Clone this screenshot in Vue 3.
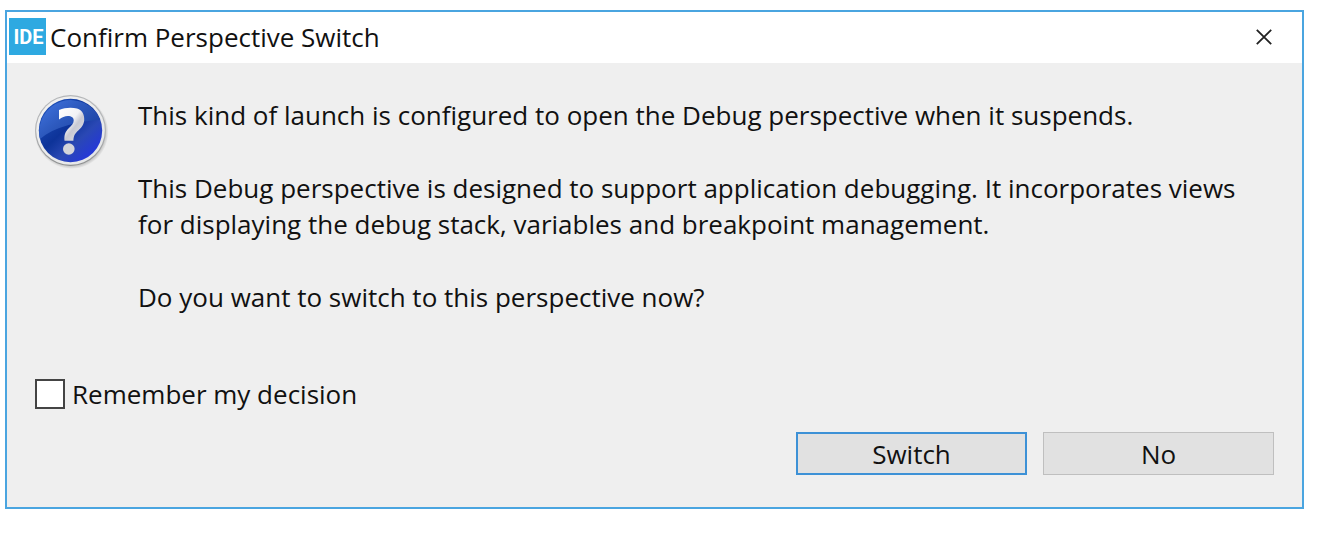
<script setup>
import { ref } from 'vue'

const remember = ref(false)
</script>

<template>
  <main class="desktop">
    <section class="dialog" role="dialog" aria-labelledby="dialog-title" aria-describedby="dialog-message">
      <header class="titlebar">
        <span class="app-icon" aria-hidden="true">IDE</span>
        <h1 id="dialog-title" class="title">Confirm Perspective Switch</h1>
        <button class="close" type="button" aria-label="Close">
          <svg width="16" height="16" viewBox="0 0 16 16" aria-hidden="true">
            <path d="M0.8 0.8 L15.2 15.2 M15.2 0.8 L0.8 15.2" fill="none" stroke="#222" stroke-width="1.8" />
          </svg>
        </button>
      </header>

      <div class="body">
        <div class="content">
          <svg class="question" width="76" height="76" viewBox="0 0 76 76" aria-hidden="true">
            <defs>
              <linearGradient id="ring" x1="0" y1="0" x2="0" y2="1">
                <stop offset="0" stop-color="#b5b7b9" />
                <stop offset="0.5" stop-color="#b3b5b7" />
                <stop offset="1" stop-color="#8c8e8f" />
              </linearGradient>
              <linearGradient id="rim" x1="0" y1="0" x2="1" y2="1">
                <stop offset="0" stop-color="#f2f2f2" />
                <stop offset="1" stop-color="#e4e5e6" />
              </linearGradient>
              <linearGradient id="ball" x1="0.1" y1="0.1" x2="0.85" y2="0.9">
                <stop offset="0" stop-color="#1c4fb8" />
                <stop offset="0.45" stop-color="#0d3399" />
                <stop offset="0.7" stop-color="#2a48b4" />
                <stop offset="1" stop-color="#2436dc" />
              </linearGradient>
              <linearGradient id="gloss" x1="0" y1="0" x2="1" y2="0.8">
                <stop offset="0" stop-color="#4276e2" />
                <stop offset="0.5" stop-color="#2c58bc" />
                <stop offset="1" stop-color="#1a40a0" />
              </linearGradient>
              <linearGradient id="mark" x1="0" y1="0" x2="1" y2="1">
                <stop offset="0" stop-color="#ffffff" />
                <stop offset="0.45" stop-color="#f2f2f5" />
                <stop offset="0.6" stop-color="#c9cad3" />
                <stop offset="1" stop-color="#e5e5ea" />
              </linearGradient>
              <radialGradient id="shade">
                <stop offset="0.9" stop-color="#777" stop-opacity="0.4" />
                <stop offset="1" stop-color="#777" stop-opacity="0" />
              </radialGradient>
            </defs>
            <circle cx="36.5" cy="37" r="37" fill="url(#shade)" />
            <circle cx="35.5" cy="35.5" r="35.5" fill="url(#ring)" />
            <circle cx="35.5" cy="35.5" r="34.3" fill="url(#rim)" />
            <circle cx="35.5" cy="35.5" r="31.7" fill="url(#ball)" />
            <path d="M5 44 A31.7 31.7 0 0 1 65.3 25 C43 26 19 32 5 44 Z" fill="url(#gloss)" />
            <path d="M24 15 C30 12.4 37 12 42 13.6 C47.5 15.4 49.6 20 49.2 25.5 C48.8 30 46 33 43.3 35.5 C40 38.5 38.6 40.5 38.4 45.8 L29.5 45.8 C29 40 30.3 36.5 34 33 C37 30.2 38.6 28.5 38.7 25.5 C38.8 22.5 36.5 21 32.8 21 C29.8 21 27 22.4 24 24.5 Z" fill="url(#mark)" />
            <circle cx="33.8" cy="54" r="5.8" fill="#d3d4da" />
          </svg>
          <div id="dialog-message" class="message">
            <p>This kind of launch is configured to open the Debug perspective when it suspends.</p>
            <p>This Debug perspective is designed to support application debugging. It incorporates views for displaying the debug stack, variables and breakpoint management.</p>
            <p>Do you want to switch to this perspective now?</p>
          </div>
        </div>

        <label class="remember" for="remember">
          <input id="remember" v-model="remember" type="checkbox" />
          <span>Remember my decision</span>
        </label>

        <footer class="actions">
          <button class="action primary" type="button">Switch</button>
          <button class="action" type="button">No</button>
        </footer>
      </div>
    </section>
  </main>
</template>

<style>
body {
  margin: 0;
  background: #fff;
}
</style>

<style scoped>
* {
  box-sizing: border-box;
}

.desktop {
  padding: 10px 15px 31px 5px;
  font-family: "Segoe UI", "Open Sans", "Noto Sans", sans-serif;
  font-size: 26px;
  line-height: 36px;
  color: #111;
}

.dialog {
  border: 2px solid #4aa5e0;
  background: #efefef;
}

.titlebar {
  display: flex;
  align-items: center;
  gap: 4px;
  height: 51px;
  padding: 0 30px 2px 2px;
  background: #fff;
}

.app-icon {
  display: flex;
  flex: none;
  align-items: center;
  justify-content: center;
  width: 37px;
  height: 37px;
  padding-left: 2px;
  background: #2ea9e1;
  color: #fff;
  font-family: Roboto, sans-serif;
  font-size: 20px;
  font-weight: 700;
}

.title {
  flex: 1;
  margin: 0;
  font-size: 26px;
  font-weight: 400;
}

.close {
  display: flex;
  padding: 0;
  border: 0;
  background: none;
}

.body {
  padding: 32px 28px;
}

.content {
  display: flex;
  gap: 27px;
}

.question {
  flex: none;
}

.message {
  flex: 1;
  padding-top: 2px;
}

.message p {
  margin: 0 0 37px;
}

.remember {
  display: inline-flex;
  align-items: center;
  gap: 7px;
  margin-top: 24px;
}

.remember input {
  appearance: none;
  width: 30px;
  height: 30px;
  margin: 0;
  border: 2px solid #444;
  background: #fff;
}

.remember input:checked {
  background: #444;
  box-shadow: inset 0 0 0 4px #fff;
}

.actions {
  display: flex;
  justify-content: flex-end;
  gap: 16px;
  margin-top: 15px;
}

.action {
  width: 231px;
  height: 43px;
  padding: 0;
  border: 1px solid #bfbfbf;
  background: #e1e1e1;
  color: #111;
  font: inherit;
}

.primary {
  border: 2px solid #3d91d6;
}
</style>
